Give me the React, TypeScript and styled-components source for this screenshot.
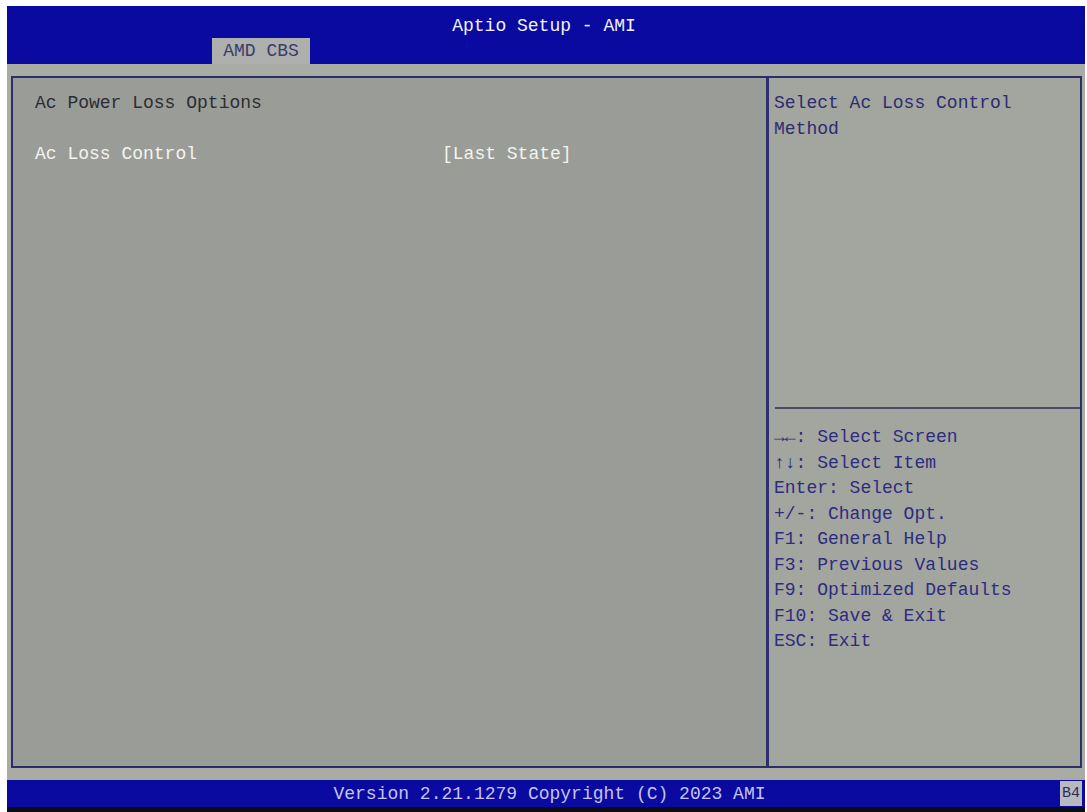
import { createGlobalStyle, styled } from "styled-components";

const GlobalStyle = createGlobalStyle`
  html, body {
    margin: 0;
    padding: 0;
    background: #ffffff;
  }
  body {
    font-family: "Liberation Mono", "DejaVu Sans Mono", monospace;
    font-size: 18px;
  }
`;

const Screen = styled.div`
  width: 1087px;
  height: 812px;
  box-sizing: border-box;
  padding: 6px 2px 0 7px;
  display: flex;
  flex-direction: column;
  background: #ffffff;
`;

const Header = styled.div`
  height: 58px;
  background: #0a0aa0;
  display: flex;
  flex-direction: column;
  justify-content: space-between;
`;

const Title = styled.div`
  text-align: center;
  color: #f2f2f6;
  padding-top: 8px;
  line-height: 24px;
  padding-right: 4px;
`;

const TabBar = styled.div`
  display: flex;
  padding-left: 205px;
`;

const Tab = styled.div`
  height: 26px;
  line-height: 26px;
  padding: 0 10px;
  width: 78px;
  text-align: center;
  background: #adb0ad;
  color: #3c3c6c;
`;

const Body = styled.div`
  flex: 1;
  background: #a9aba5;
  padding: 12px 3px 12px 4px;
  display: flex;
`;

const Panel = styled.div`
  flex: 1;
  display: flex;
  border: 2px solid #2e2e66;
  background: #9a9d97;
`;

const MainColumn = styled.div`
  width: 756px;
  padding: 13px 0 0 22px;
  box-sizing: border-box;
  border-right: 3px solid #2e2e70;
`;

const Line = styled.div<{ $light?: boolean }>`
  display: flex;
  height: 25.6px;
  line-height: 25.6px;
  color: ${(p) => (p.$light ? "#f4f4f0" : "#2c2c34")};
  white-space: pre;
`;

const Label = styled.span`
  width: 407px;
`;

const Spacer = styled.div`
  height: 25.6px;
`;

const HelpColumn = styled.div`
  flex: 1;
  display: flex;
  flex-direction: column;
  background: #a3a59f;
`;

const HelpText = styled.div`
  height: 329px;
  padding: 13px 0 0 5px;
  box-sizing: border-box;
  color: #2c2c70;
  line-height: 25.6px;
`;

const Divider = styled.div`
  height: 2px;
  background: #4a4a66;
  margin: 0 0 0 6px;
`;

const Keys = styled.div`
  padding: 16px 0 0 5px;
  line-height: 25.5px;
  color: #2c2c80;
`;

const KeyRow = styled.div`
  white-space: pre;
`;

const Footer = styled.div`
  height: 27px;
  background: #0a0aa0;
  display: flex;
  align-items: center;
`;

const FooterText = styled.div`
  flex: 1;
  text-align: center;
  color: #c4c4ee;
  padding-left: 32px;
`;

const Badge = styled.div`
  width: 22px;
  height: 25px;
  margin-right: 3px;
  background: #b8bac0;
  color: #2c2c5c;
  font-size: 15px;
  line-height: 25px;
  text-align: center;
`;

const BottomEdge = styled.div`
  height: 5px;
  background: #0c0c14;
`;

const keys = [
  "\u2192\u2190: Select Screen",
  "\u2191\u2193: Select Item",
  "Enter: Select",
  "+/-: Change Opt.",
  "F1: General Help",
  "F3: Previous Values",
  "F9: Optimized Defaults",
  "F10: Save & Exit",
  "ESC: Exit",
];

export default function App() {
  return (
    <>
      <GlobalStyle />
      <Screen>
        <Header>
          <Title>Aptio Setup - AMI</Title>
          <TabBar>
            <Tab>AMD CBS</Tab>
          </TabBar>
        </Header>
        <Body>
          <Panel>
            <MainColumn>
              <Line>Ac Power Loss Options</Line>
              <Spacer />
              <Line $light>
                <Label>Ac Loss Control</Label>
                <span>[Last State]</span>
              </Line>
            </MainColumn>
            <HelpColumn>
              <HelpText>
                Select Ac Loss Control
                <br />
                Method
              </HelpText>
              <Divider />
              <Keys>
                {keys.map((k) => (
                  <KeyRow key={k}>{k}</KeyRow>
                ))}
              </Keys>
            </HelpColumn>
          </Panel>
        </Body>
        <Footer>
          <FooterText>Version 2.21.1279 Copyright (C) 2023 AMI</FooterText>
          <Badge>B4</Badge>
        </Footer>
        <BottomEdge />
      </Screen>
    </>
  );
}
